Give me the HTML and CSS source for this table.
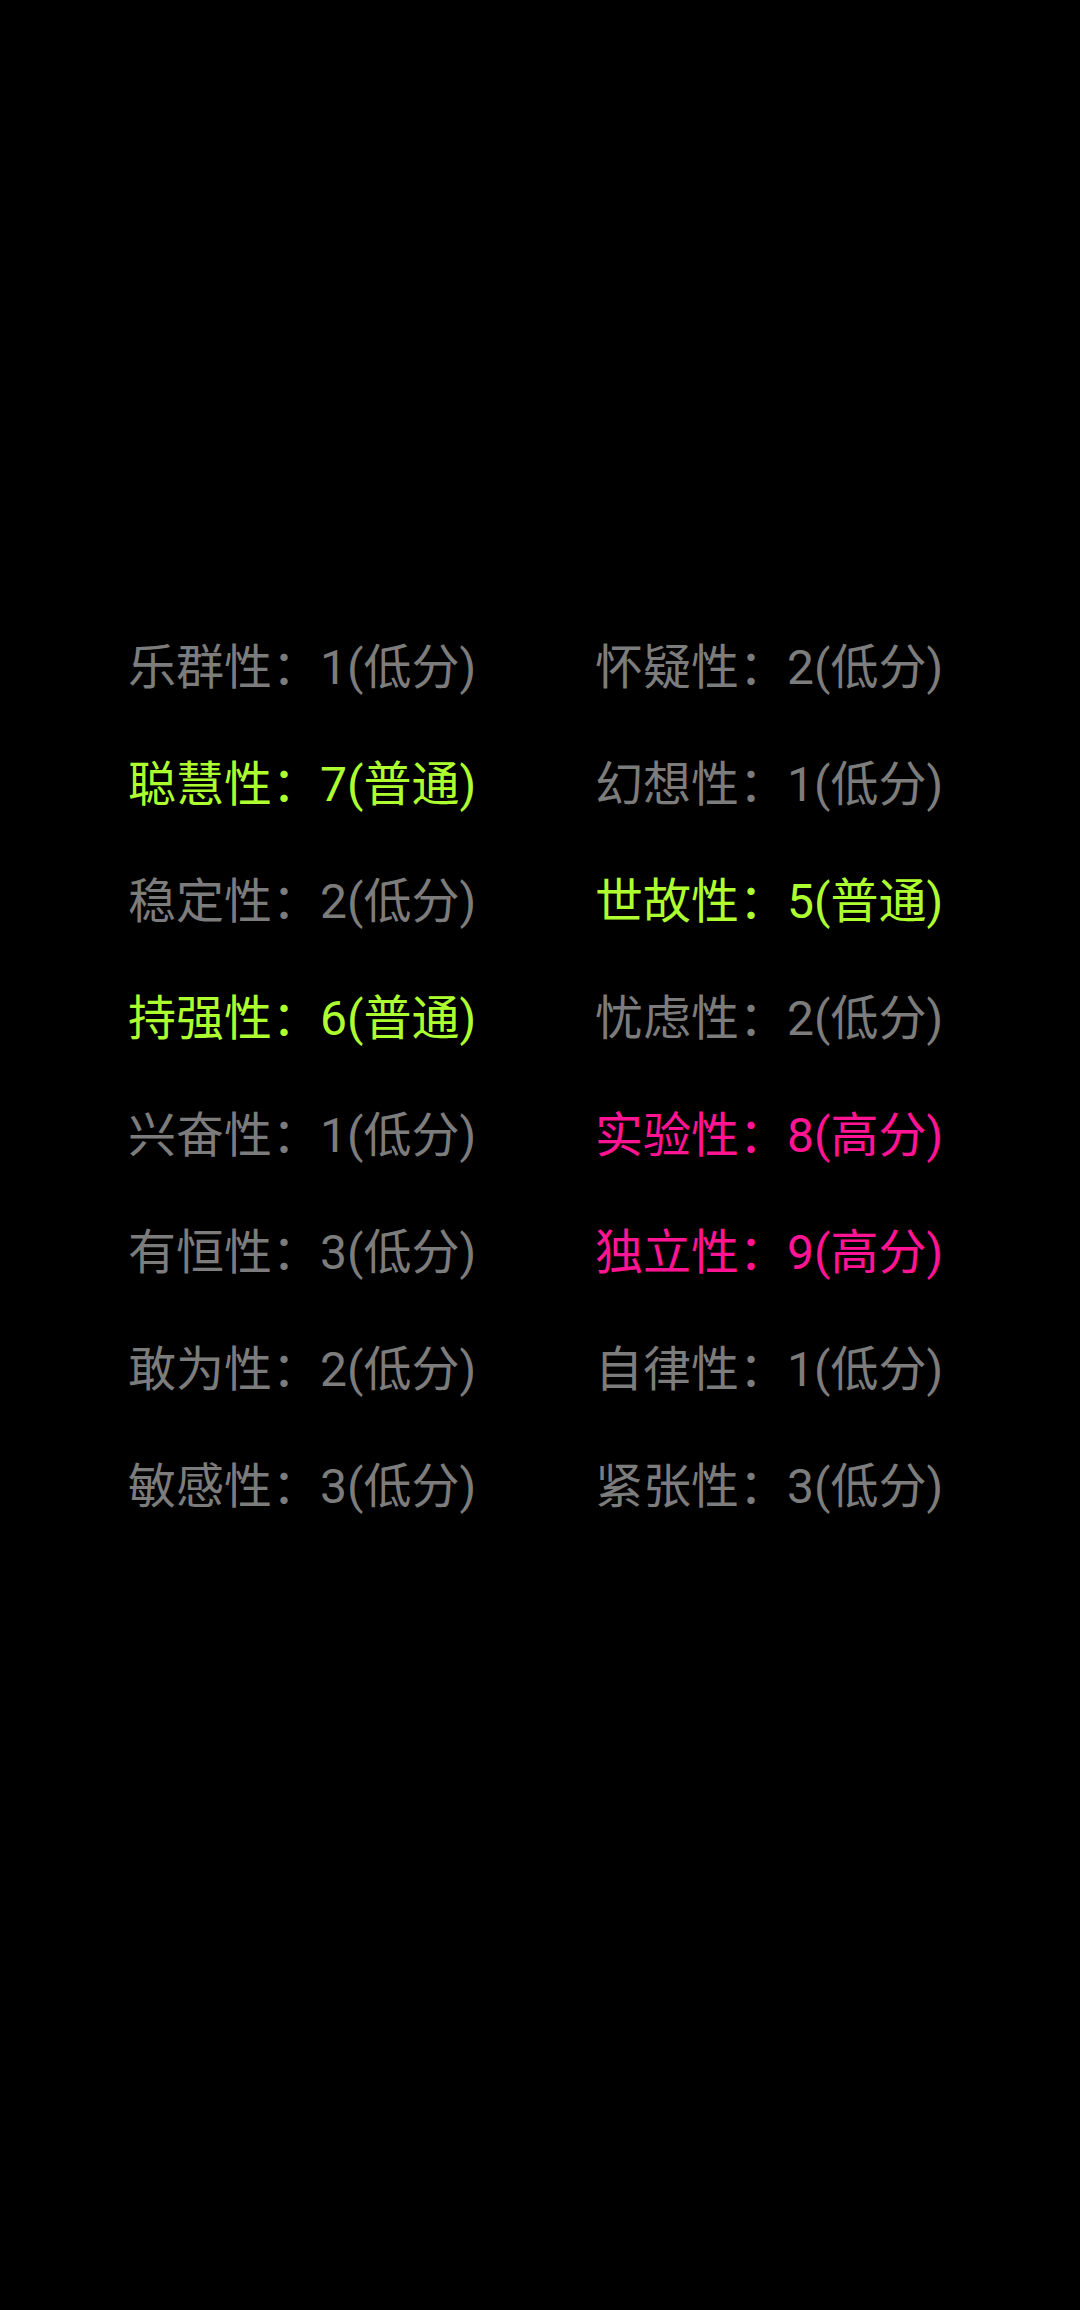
FILE: index.html
```html
<!DOCTYPE html>
<html lang="zh-CN">
<head>
<meta charset="utf-8">
<title>16PF</title>
<link rel="stylesheet" href="styles.css">
</head>
<body>
<main class="screen">
  <section class="grid">
    <div class="item low">乐群性：1(低分)</div>
    <div class="item low">怀疑性：2(低分)</div>
    <div class="item mid">聪慧性：7(普通)</div>
    <div class="item low">幻想性：1(低分)</div>
    <div class="item low">稳定性：2(低分)</div>
    <div class="item mid">世故性：5(普通)</div>
    <div class="item mid">持强性：6(普通)</div>
    <div class="item low">忧虑性：2(低分)</div>
    <div class="item low">兴奋性：1(低分)</div>
    <div class="item high">实验性：8(高分)</div>
    <div class="item low">有恒性：3(低分)</div>
    <div class="item high">独立性：9(高分)</div>
    <div class="item low">敢为性：2(低分)</div>
    <div class="item low">自律性：1(低分)</div>
    <div class="item low">敏感性：3(低分)</div>
    <div class="item low">紧张性：3(低分)</div>
  </section>
</main>
</body>
</html>
```

FILE: styles.css
```css
html, body {
  margin: 0;
  padding: 0;
  background: #000;
}
.screen {
  width: 1080px;
  height: 2310px;
  background: #000;
  padding-top: 609px;
  box-sizing: border-box;
}
.grid {
  display: grid;
  grid-template-columns: 467px 467px;
  grid-auto-rows: 117px;
  padding-left: 128px;
}
.item {
  font-family: Roboto, "Noto Sans CJK SC", sans-serif;
  font-size: 48px;
  line-height: 117px;
  white-space: nowrap;
}
.low { color: #7c7c7c; }
.mid { color: #adff2f; }
.high { color: #ff1493; }
```
